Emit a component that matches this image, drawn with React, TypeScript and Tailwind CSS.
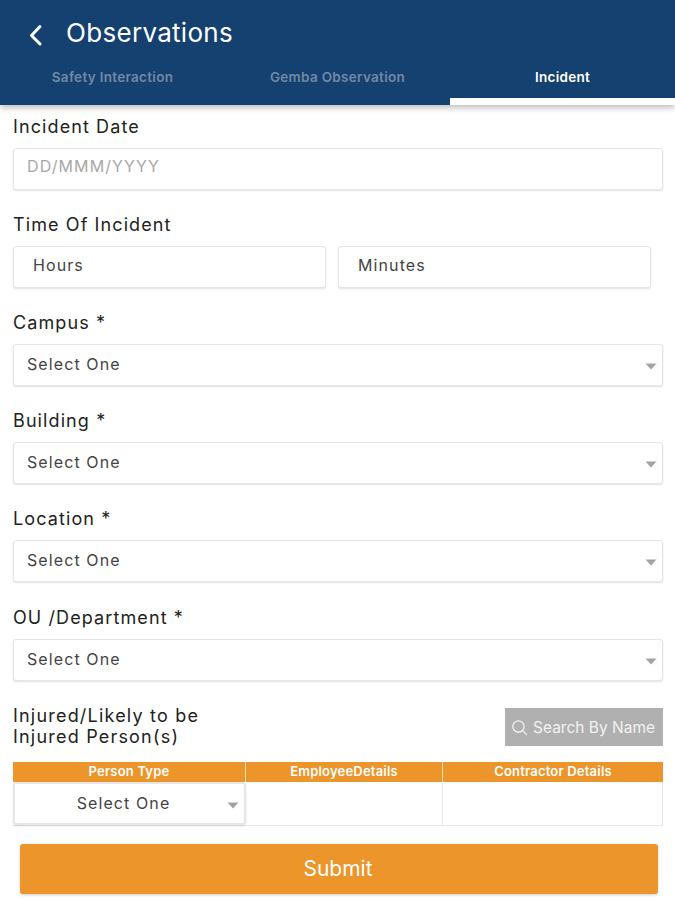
import React from "react";

function Caret({ className = "" }: { className?: string }) {
  return (
    <svg width="12" height="7" viewBox="0 0 12 7" className={className}>
      <path d="M0.5 0.5H11.5L6 6.5Z" fill="#a3a3a3" />
    </svg>
  );
}

function Label({ children }: { children: React.ReactNode }) {
  return <div className="h-[20px] text-[18px] leading-[24px] tracking-[1.1px] text-[#222]">{children}</div>;
}

function Box({ children, className = "" }: { children: React.ReactNode; className?: string }) {
  return (
    <div className={`h-[42px] flex items-center rounded-[3px] border border-[#e6e6e6] bg-white shadow-[0_1px_2px_rgba(0,0,0,0.12)] text-[16px] tracking-[1.1px] text-[#444] ${className}`}>
      {children}
    </div>
  );
}

function Select({ label }: { label: string }) {
  return (
    <div className="flex flex-col gap-[13px]">
      <Label>{label}</Label>
      <Box className="pl-[13px] pr-[5px] justify-between">
        <span className="-mt-[2px]">Select One</span>
        <Caret className="mt-[3px]" />
      </Box>
    </div>
  );
}

export default function App() {
  return (
    <div className="w-[675px] h-[900px] bg-white overflow-hidden font-['Inter','Noto_Sans',sans-serif]">
      <header className="relative h-[105px] bg-[#14416f] shadow-[0_3px_6px_rgba(0,0,0,0.25)]">
        <div className="h-[66px] flex items-center pl-[28px] gap-[22px]">
          <svg width="16" height="24" viewBox="0 0 16 24" fill="none" stroke="white" strokeWidth="3" strokeLinecap="round" strokeLinejoin="round" className="mt-[3px]">
            <path d="M12 3.5 3.5 12.5l8.5 8.5" />
          </svg>
          <span className="text-[26px] leading-none text-white tracking-[0.3px] -mt-[1px]">Observations</span>
        </div>
        <div className="grid grid-cols-3 h-[39px] text-[13.5px] font-semibold tracking-[0.3px] leading-[22px]">
          <div className="flex justify-center text-[#6f8aa6]"><span>Safety Interaction</span></div>
          <div className="flex justify-center text-[#6f8aa6]"><span>Gemba Observation</span></div>
          <div className="flex justify-center text-white border-b-[7px] border-white"><span>Incident</span></div>
        </div>
      </header>

      <main className="pl-[13px] pr-[12px] pt-[10px] flex flex-col">
        <div className="flex flex-col gap-[13px]">
          <Label>Incident Date</Label>
          <Box className="pl-[13px]"><span className="-mt-[6px] text-[#a8a8a8]">DD/MMM/YYYY</span></Box>
        </div>
        <div className="flex flex-col gap-[13px] mt-[23px]">
          <Label>Time Of Incident</Label>
          <div className="flex gap-[12px] w-[638px]">
            <Box className="flex-1 pl-[19px]"><span className="-mt-[4px]">Hours</span></Box>
            <Box className="flex-1 pl-[19px]"><span className="-mt-[4px]">Minutes</span></Box>
          </div>
        </div>
        <div className="flex flex-col gap-[23px] mt-[23px]">
          <Select label="Campus *" />
          <Select label="Building *" />
          <Select label="Location *" />
          <div className="mt-[1px]"><Select label="OU /Department *" /></div>
        </div>

        <div className="flex justify-between items-start mt-[24px]">
          <div className="text-[18px] leading-[21px] tracking-[1.2px] text-[#222]">
            Injured/Likely to be<br />Injured Person(s)
          </div>
          <div className="w-[158px] h-[38px] mt-[3px] bg-[#b0b0b0] flex items-center pl-[6px] gap-[5px] text-[15.5px] text-[#f2f2f2] whitespace-nowrap">
            <svg width="17" height="17" viewBox="0 0 24 24" fill="none" stroke="#f0f0f0" strokeWidth="1.8" strokeLinecap="round">
              <circle cx="10.5" cy="10.5" r="8" />
              <path d="m17 17 5 5" />
            </svg>
            <span className="mt-[1px]">Search By Name</span>
          </div>
        </div>

        <div className="mt-[15px] w-[650px]">
          <div className="grid grid-cols-[233px_197px_220px] h-[20px] bg-[#eb952a] text-white text-[13px] font-semibold tracking-[0.2px] leading-[19px] text-center">
            <div className="border-r border-[#f7e0c0]">Person Type</div>
            <div className="border-r border-[#f7e0c0]">EmployeeDetails</div>
            <div>Contractor Details</div>
          </div>
          <div className="grid grid-cols-[233px_197px_220px] h-[44px] border-b border-[#e8e8e8]">
            <div className="relative flex items-center justify-center pr-[12px] text-[16px] tracking-[1.1px] text-[#444] rounded-[3px] border-2 border-[#e6e6e6] shadow-[0_1px_2px_rgba(0,0,0,0.12)]">
              <span className="-mt-[2px]">Select One</span>
              <Caret className="absolute right-[5px] top-[18px]" />
            </div>
            <div className="border-r border-[#e8e8e8]" />
            <div className="border-r border-[#e8e8e8]" />
          </div>
        </div>

        <div className="mt-[18px] ml-[7px] mr-[5px] h-[50px] rounded-[3px] bg-[#eb952a] shadow-[0_1px_3px_rgba(0,0,0,0.2)] flex items-center justify-center pr-[2px] text-white text-[21px]">
          Submit
        </div>
      </main>
    </div>
  );
}
